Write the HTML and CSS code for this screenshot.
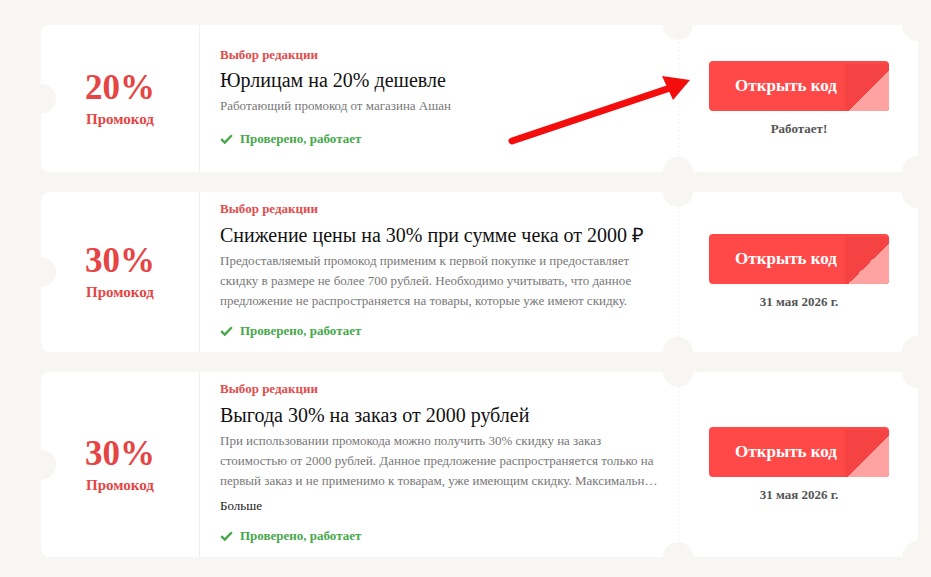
FILE: index.html
```html
<!DOCTYPE html>
<html lang="ru">
<head>
<meta charset="utf-8">
<title>Промокоды</title>
<link rel="stylesheet" href="styles.css">
</head>
<body>
<div class="list">
  <div class="card card-first">
    <span class="notch notch-l"></span>
    <span class="notch notch-t"></span>
    <span class="notch notch-b"></span>
    <span class="notch notch-tr"></span>
    <span class="notch notch-br"></span>
    <div class="deal">
      <div class="deal-value">20%</div>
      <div class="deal-type">Промокод</div>
    </div>
    <div class="info">
      <div class="label">Выбор редакции</div>
      <div class="title">Юрлицам на 20% дешевле</div>
      <div class="desc">Работающий промокод от магазина Ашан</div>
      <div class="verified"><svg class="check" width="13" height="10" viewBox="0 0 13 10"><polyline points="1.2,5.2 4.8,8.6 11.8,1.2" fill="none" stroke="#46a84b" stroke-width="2.4"/></svg>Проверено, работает</div>
    </div>
    <div class="action">
      <div class="btn">Открыть код</div>
      <div class="status">Работает!</div>
    </div>
  </div>

  <div class="card">
    <span class="notch notch-l"></span>
    <span class="notch notch-t"></span>
    <span class="notch notch-b"></span>
    <span class="notch notch-tr"></span>
    <span class="notch notch-br"></span>
    <div class="deal">
      <div class="deal-value">30%</div>
      <div class="deal-type">Промокод</div>
    </div>
    <div class="info">
      <div class="label">Выбор редакции</div>
      <div class="title">Снижение цены на 30% при сумме чека от 2000 ₽</div>
      <div class="desc">Предоставляемый промокод применим к первой покупке и предоставляет скидку в размере не более 700 рублей. Необходимо учитывать, что данное предложение не распространяется на товары, которые уже имеют скидку.</div>
      <div class="verified"><svg class="check" width="13" height="10" viewBox="0 0 13 10"><polyline points="1.2,5.2 4.8,8.6 11.8,1.2" fill="none" stroke="#46a84b" stroke-width="2.4"/></svg>Проверено, работает</div>
    </div>
    <div class="action">
      <div class="btn">Открыть код</div>
      <div class="status">31 мая 2026 г.</div>
    </div>
  </div>

  <div class="card">
    <span class="notch notch-l"></span>
    <span class="notch notch-t"></span>
    <span class="notch notch-b"></span>
    <span class="notch notch-tr"></span>
    <span class="notch notch-br"></span>
    <div class="deal">
      <div class="deal-value">30%</div>
      <div class="deal-type">Промокод</div>
    </div>
    <div class="info">
      <div class="label">Выбор редакции</div>
      <div class="title">Выгода 30% на заказ от 2000 рублей</div>
      <div class="desc">При использовании промокода можно получить 30% скидку на заказ стоимостью от 2000 рублей. Данное предложение распространяется только на первый заказ и не применимо к товарам, уже имеющим скидку. Максимальн…</div>
      <div class="more">Больше</div>
      <div class="verified"><svg class="check" width="13" height="10" viewBox="0 0 13 10"><polyline points="1.2,5.2 4.8,8.6 11.8,1.2" fill="none" stroke="#46a84b" stroke-width="2.4"/></svg>Проверено, работает</div>
    </div>
    <div class="action">
      <div class="btn">Открыть код</div>
      <div class="status">31 мая 2026 г.</div>
    </div>
  </div>
</div>

<svg class="arrow" width="931" height="577" viewBox="0 0 931 577">
  <line x1="512" y1="141" x2="670" y2="88" stroke="#f40d0d" stroke-width="7" stroke-linecap="round"/>
  <polygon points="662,76 690,80 673,100" fill="#f40d0d"/>
</svg>
</body>
</html>
```

FILE: styles.css
```css
* { box-sizing: border-box; }

html, body {
  margin: 0;
  padding: 0;
  background: #f7f6f2;
}

body {
  font-family: "Liberation Serif", "Times New Roman", serif;
  width: 931px;
  height: 577px;
  overflow: hidden;
  position: relative;
}

.list {
  display: flex;
  flex-direction: column;
  gap: 20px;
  padding: 25px 0 0 41px;
  width: 918px;
}

.card {
  position: relative;
  display: grid;
  grid-template-columns: 159px 1fr 240px;
  background: #fff;
  border-radius: 8px;
  overflow: hidden;
}

.card-first {
  min-height: 147px;
}

.notch {
  position: absolute;
  width: 30px;
  height: 30px;
  border-radius: 50%;
  background: #f7f6f2;
  z-index: 2;
}

.notch-l { left: -15px; top: 50%; margin-top: -15px; }
.notch-t { left: 622px; top: -15px; }
.notch-b { left: 622px; bottom: -15px; }
.notch-tr { right: -16px; top: -16px; width: 32px; height: 32px; }
.notch-br { right: -16px; bottom: -16px; width: 32px; height: 32px; }

.deal {
  display: flex;
  flex-direction: column;
  align-items: center;
  justify-content: center;
  color: #e64545;
  font-weight: bold;
  border-right: 1px solid #efefef;
}

.deal-value {
  font-size: 35px;
  line-height: 36px;
}

.deal-type {
  font-size: 15px;
  line-height: 18px;
  margin-top: 4px;
}

.info {
  display: flex;
  flex-direction: column;
  justify-content: center;
  padding: 8px 20px 11px 20px;
}

.label {
  color: #e24d4d;
  font-size: 13px;
  font-weight: bold;
  line-height: 18px;
}

.title {
  color: #111;
  font-size: 20px;
  line-height: 26px;
  padding-top: 4px;
  margin-bottom: 3px;
}

.card-first .title {
  padding-top: 3px;
}

.desc {
  color: #777;
  font-size: 13px;
  line-height: 20px;
}

.more {
  color: #1a1a1a;
  font-size: 13px;
  line-height: 20px;
  margin-top: 5px;
}

.verified {
  display: flex;
  align-items: center;
  gap: 7px;
  margin-top: 10px;
  color: #46a84b;
  font-size: 13px;
  font-weight: bold;
  line-height: 20px;
}

.card-first .verified {
  margin-top: 13px;
}

.check {
  flex: none;
}

.action {
  display: flex;
  flex-direction: column;
  align-items: center;
  justify-content: center;
  border-left: 2px dotted #f8f8f8;
}

.btn {
  position: relative;
  width: 180px;
  height: 50px;
  border-radius: 4px;
  background: #ff4848;
  color: #fff;
  font-size: 17px;
  font-weight: bold;
  display: flex;
  align-items: center;
  justify-content: center;
  padding-right: 26px;
  overflow: hidden;
}

.btn::before {
  content: "";
  position: absolute;
  right: 0;
  top: 3px;
  width: 44px;
  bottom: 0;
  background: #f54343;
}

.btn::after {
  content: "";
  position: absolute;
  right: 0;
  bottom: 0;
  width: 41px;
  height: 41px;
  background: linear-gradient(to top left, #ffa2a2 50%, rgba(255, 162, 162, 0) 50%);
}

.status {
  margin-top: 10px;
  color: #555;
  font-size: 13px;
  font-weight: bold;
  line-height: 16px;
}

.arrow {
  position: absolute;
  left: 0;
  top: 0;
  pointer-events: none;
  z-index: 5;
}
```
